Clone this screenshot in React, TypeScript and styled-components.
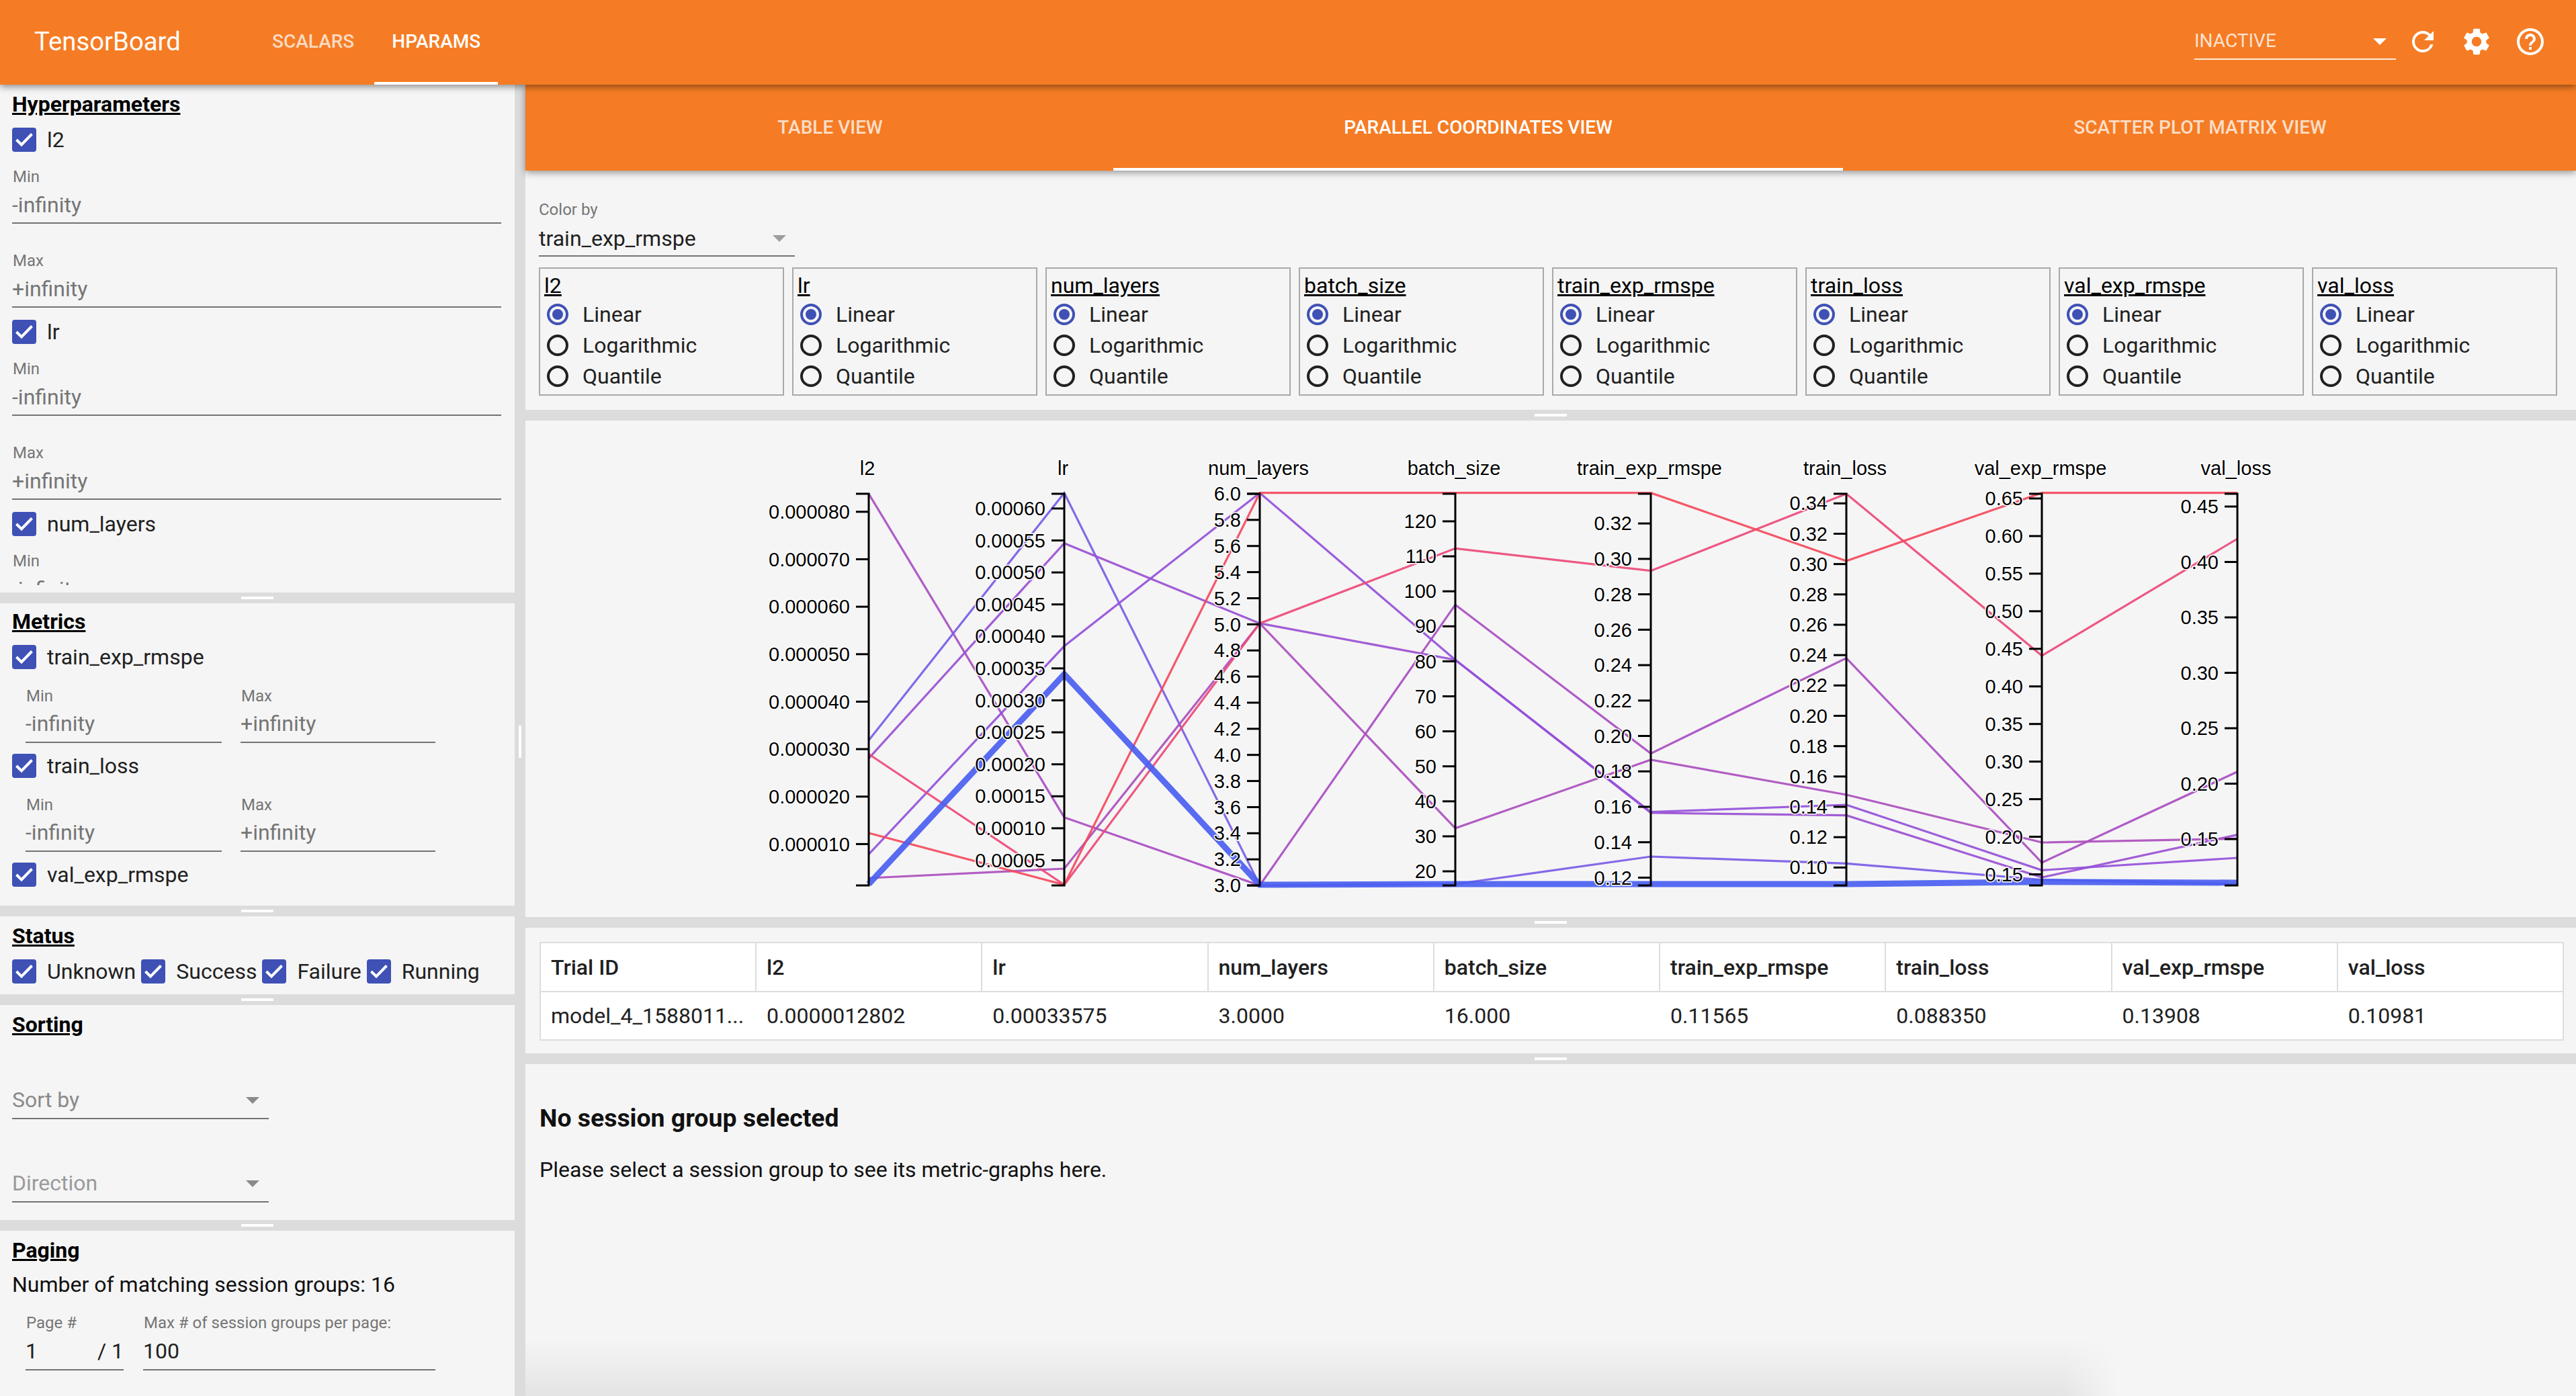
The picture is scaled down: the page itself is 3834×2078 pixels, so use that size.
import React from 'react'
import styled, { createGlobalStyle } from 'styled-components'
import { MdRefresh, MdSettings, MdHelpOutline } from 'react-icons/md'

const GlobalStyle = createGlobalStyle`
  html, body {
    margin: 0;
    padding: 0;
    background: #f5f5f5;
    overflow: hidden;
  }
  body {
    font-family: Roboto, "Liberation Sans", sans-serif;
    font-size: 32px;
    line-height: 40px;
    color: #212121;
  }
`

const Page = styled.div`
  width: 3834px;
  height: 2078px;
  display: flex;
  flex-direction: column;
  overflow: hidden;
`

const Toolbar = styled.header`
  position: relative;
  z-index: 3;
  flex: none;
  height: 126px;
  display: flex;
  align-items: center;
  padding-left: 51px;
  background: #f57c24;
  color: #fff;
  box-shadow: 0 3px 10px rgba(0, 0, 0, 0.45);
`

const Logo = styled.div`
  width: 217px;
  font-size: 38.3px;
  line-height: 48px;
  white-space: nowrap;
  margin-right: 111px;
  margin-bottom: 2px;
`

const NavTab = styled.div<{ $active?: boolean }>`
  align-self: stretch;
  display: flex;
  align-items: center;
  box-sizing: border-box;
  padding: 2px 26px 0;
  margin-right: 4px;
  font-size: 28px;
  font-weight: 500;
  color: ${(p) => (p.$active ? '#fff' : 'rgba(255,255,255,0.72)')};
  border-bottom: 4px solid ${(p) => (p.$active ? '#fff' : 'transparent')};
`

const ToolRight = styled.div`
  margin-left: auto;
  display: flex;
  align-items: center;
  padding-right: 44px;
`

const ReloadSelect = styled.div`
  position: relative;
  box-sizing: border-box;
  width: 300px;
  margin-top: 6px;
  margin-right: 16px;
  padding-bottom: 8px;
  border-bottom: 2px solid rgba(255, 255, 255, 0.85);
  font-size: 28px;
  line-height: 36px;
  color: rgba(255, 255, 255, 0.8);
`

const Caret = styled.span<{ $color: string; $right: number; $top: number }>`
  position: absolute;
  right: ${(p) => p.$right}px;
  top: ${(p) => p.$top}px;
  width: 0;
  height: 0;
  border-left: 10px solid transparent;
  border-right: 10px solid transparent;
  border-top: 10px solid ${(p) => p.$color};
`

const IconBtn = styled.div`
  width: 48px;
  height: 48px;
  margin-bottom: 2px;
  font-size: 48px;
  display: flex;
  & + & {
    margin-left: 32px;
  }
`

const Body = styled.div`
  flex: 1;
  min-height: 0;
  display: flex;
`

const Sidebar = styled.aside`
  flex: none;
  width: 766px;
  display: flex;
  flex-direction: column;
  background: #f5f5f5;
`

const Section = styled.section<{ $h?: number; $top?: number }>`
  flex: ${(p) => (p.$h ? 'none' : '1')};
  height: ${(p) => (p.$h ? `${p.$h}px` : 'auto')};
  box-sizing: border-box;
  padding: ${(p) => p.$top ?? 9}px 20px 0 18px;
  overflow: hidden;
`

const Clip = styled.div<{ $h: number }>`
  height: ${(p) => p.$h}px;
  overflow: hidden;
`

const Title = styled.h4`
  margin: 0 0 15px;
  font-size: 32px;
  line-height: 40px;
  font-weight: 700;
  color: #000;
  text-decoration: underline;
`

const HGutter = styled.div`
  flex: none;
  height: 16px;
  background: #dcdcdc;
  display: flex;
  align-items: center;
  justify-content: center;
`

const Pill = styled.span`
  width: 48px;
  height: 4px;
  background: #fff;
`

const VGutter = styled.div`
  flex: none;
  width: 16px;
  padding-top: 4px;
  box-sizing: border-box;
  background: #dcdcdc;
  display: flex;
  align-items: center;
  justify-content: center;
`

const VPill = styled.span`
  width: 4px;
  height: 48px;
  background: #fff;
`

const CheckRow = styled.div<{ $gap?: number }>`
  height: 36px;
  display: flex;
  align-items: center;
  margin-top: ${(p) => p.$gap ?? 0}px;
`

const CheckBox = styled.span`
  flex: none;
  width: 36px;
  height: 36px;
  border-radius: 4px;
  background: #3f51b5;
  margin-right: 16px;
  display: flex;
`

const StatusRow = styled.div`
  display: flex;
`

const StatusItem = styled.div`
  display: flex;
  align-items: center;
  height: 36px;
  margin-right: 8px;
`

const Field = styled.div<{ $top: number }>`
  margin-top: ${(p) => p.$top}px;
`

const FieldLabel = styled.div`
  font-size: 24px;
  line-height: 30px;
  color: #757575;
  padding-left: 1px;
`

const FieldValue = styled.div<{ $gap: number; $pad: number; $dark?: boolean }>`
  margin-top: ${(p) => p.$gap}px;
  padding-bottom: ${(p) => p.$pad}px;
  line-height: 40px;
  color: ${(p) => (p.$dark ? '#212121' : '#757575')};
  border-bottom: 2px solid #737373;
  display: flex;
  justify-content: space-between;
`

const FieldPair = styled.div<{ $cols: string; $gap: number; $top: number }>`
  display: grid;
  grid-template-columns: ${(p) => p.$cols};
  column-gap: ${(p) => p.$gap}px;
  margin-top: ${(p) => p.$top}px;
  padding-left: 20px;
`

const SelectBox = styled.div<{ $top: number; $w: number; $color: string; $pad: number }>`
  position: relative;
  width: ${(p) => p.$w}px;
  margin-top: ${(p) => p.$top}px;
  padding-bottom: ${(p) => p.$pad}px;
  line-height: 40px;
  color: ${(p) => p.$color};
  border-bottom: 2px solid #737373;
`

const PlainLine = styled.div`
  margin-top: -4px;
  color: #111;
`

const Main = styled.main`
  flex: 1;
  min-width: 0;
  display: flex;
  flex-direction: column;
  background: #f5f5f5;
`

const TabBar = styled.nav`
  position: relative;
  z-index: 2;
  flex: none;
  height: 128px;
  display: flex;
  background: #f57c24;
  box-shadow: 0 3px 10px rgba(0, 0, 0, 0.4);
`

const ViewTab = styled.div<{ $w: number; $active?: boolean; $shift?: number }>`
  flex: none;
  width: ${(p) => p.$w}px;
  box-sizing: border-box;
  display: flex;
  align-items: center;
  justify-content: center;
  padding-top: 4px;
  padding-left: ${(p) => Math.max(p.$shift ?? 0, 0)}px;
  padding-right: ${(p) => Math.max(-(p.$shift ?? 0), 0)}px;
  font-size: 28px;
  font-weight: 500;
  color: ${(p) => (p.$active ? '#fff' : 'rgba(255,255,255,0.75)')};
  border-bottom: 4px solid ${(p) => (p.$active ? '#fff' : 'transparent')};
`

const ControlsPanel = styled.div`
  flex: none;
  height: 356px;
  box-sizing: border-box;
  padding: 43px 20px 0;
`

const ColorLabel = styled.div`
  font-size: 24px;
  line-height: 30px;
  color: #757575;
`

const ScaleRow = styled.div`
  display: flex;
  gap: 12px;
  margin-top: 16px;
`

const ScaleBox = styled.div`
  flex: none;
  width: 365px;
  height: 191px;
  box-sizing: border-box;
  padding: 5px 6px 0;
  border: 2px solid #a9a9a9;
`

const ScaleName = styled.div`
  color: #000;
  text-decoration: underline;
`

const RadioRow = styled.div`
  height: 46px;
  display: flex;
  align-items: center;
  padding-left: 4px;
`

const Radio = styled.span<{ $on?: boolean }>`
  flex: none;
  box-sizing: border-box;
  width: 32px;
  height: 32px;
  margin-right: 21px;
  border-radius: 50%;
  border: 4px solid ${(p) => (p.$on ? '#3f51b5' : '#212121')};
  display: flex;
  align-items: center;
  justify-content: center;
  &::after {
    content: '';
    width: 16px;
    height: 16px;
    border-radius: 50%;
    background: ${(p) => (p.$on ? '#3f51b5' : 'transparent')};
  }
`

const ChartPanel = styled.div`
  flex: none;
  height: 739px;
`

const ChartSvg = styled.svg`
  display: block;
  text {
    font-family: "Liberation Sans", Arial, sans-serif;
    font-size: 29px;
    fill: #000;
    paint-order: stroke;
    stroke: #fff;
    stroke-width: 3px;
    stroke-linejoin: round;
  }
`

const TablePanel = styled.div`
  flex: none;
  height: 187px;
  box-sizing: border-box;
  padding: 21px 18px 0 21px;
`

const Table = styled.div`
  background: #fff;
  border: 2px solid #ddd;
`

const TableRow = styled.div<{ $head?: boolean }>`
  display: grid;
  grid-template-columns: 319px repeat(8, 1fr);
  height: ${(p) => (p.$head ? 71 : 70)}px;
  border-bottom: ${(p) => (p.$head ? '2px solid #ddd' : 'none')};
`

const Cell = styled.div<{ $head?: boolean }>`
  display: flex;
  align-items: center;
  padding-left: 15px;
  white-space: nowrap;
  overflow: hidden;
  color: #212121;
  font-weight: ${(p) => (p.$head ? 500 : 400)};
  border-left: ${(p) => (p.$head ? '2px solid #ddd' : '2px solid transparent')};
  &:first-child {
    border-left: none;
  }
`

const Details = styled.div`
  position: relative;
  flex: 1;
  box-sizing: border-box;
  padding: 58px 21px 0;
  &::after {
    content: '';
    position: absolute;
    left: 0;
    bottom: 0;
    width: 2370px;
    height: 85px;
    background: linear-gradient(rgba(0, 0, 0, 0), rgba(0, 0, 0, 0.065));
    mask-image: linear-gradient(to right, #000 96.5%, transparent);
  }
`

const DetailsTitle = styled.h3`
  margin: 0;
  font-size: 37.4px;
  line-height: 44px;
  font-weight: 700;
  color: #111;
`

const DetailsText = styled.p`
  margin: 35px 0 0;
  color: #111;
`

const Check = () => (
  <svg width="36" height="36" viewBox="0 0 36 36">
    <path d="M6.5 18 L14 25.5 L29.5 9.5" fill="none" stroke="#fff" strokeWidth="4" />
  </svg>
)

const CheckItem = ({ label, gap }: { label: string; gap?: number }) => (
  <CheckRow $gap={gap}>
    <CheckBox><Check /></CheckBox>
    {label}
  </CheckRow>
)

const HparamFields = () => (
  <>
    <Field $top={22}>
      <FieldLabel>Min</FieldLabel>
      <FieldValue $gap={7} $pad={6}>-infinity</FieldValue>
    </Field>
    <Field $top={40}>
      <FieldLabel>Max</FieldLabel>
      <FieldValue $gap={7} $pad={6}>+infinity</FieldValue>
    </Field>
  </>
)

const MetricFields = () => (
  <FieldPair $cols="292px 290px" $gap={28} $top={25}>
    <div>
      <FieldLabel>Min</FieldLabel>
      <FieldValue $gap={6} $pad={7}>-infinity</FieldValue>
    </div>
    <div>
      <FieldLabel>Max</FieldLabel>
      <FieldValue $gap={6} $pad={7}>+infinity</FieldValue>
    </div>
  </FieldPair>
)

const columns = ['l2', 'lr', 'num_layers', 'batch_size', 'train_exp_rmspe', 'train_loss', 'val_exp_rmspe', 'val_loss']
const rowValues = ['0.0000012802', '0.00033575', '3.0000', '16.000', '0.11565', '0.088350', '0.13908', '0.10981']

// axis x position, tick labels with the y of the first one and the step
type Axis = { name: string; x: number; start: number; step: number; ticks: string[] }

const seq = (from: number, to: number, by: number, digits: number) => {
  const out: string[] = []
  const n = Math.round((from - to) / by)
  for (let i = 0; i <= n; i++) out.push((from - i * by).toFixed(digits))
  return out
}

const axes: Axis[] = [
  { name: 'l2', x: 1293, start: 761.8, step: 70.66, ticks: seq(0.00008, 0.00001, 0.00001, 6) },
  { name: 'lr', x: 1584, start: 756.9, step: 47.6, ticks: seq(0.0006, 0.00005, 0.00005, 5) },
  { name: 'num_layers', x: 1875, start: 735, step: 38.87, ticks: seq(6, 3, 0.2, 1) },
  { name: 'batch_size', x: 2166, start: 776, step: 52.1, ticks: seq(120, 20, 10, 0) },
  { name: 'train_exp_rmspe', x: 2457, start: 779.2, step: 52.72, ticks: seq(0.32, 0.12, 0.02, 2) },
  { name: 'train_loss', x: 2748, start: 749.3, step: 45.17, ticks: seq(0.34, 0.1, 0.02, 2) },
  { name: 'val_exp_rmspe', x: 3039, start: 742, step: 55.95, ticks: seq(0.65, 0.15, 0.05, 2) },
  { name: 'val_loss', x: 3330, start: 754, step: 82.5, ticks: seq(0.45, 0.15, 0.05, 2) },
]

const AXIS_TOP = 735
const AXIS_BOTTOM = 1318

const trials: { color: string; width?: number; ys: number[] }[] = [
  { color: '#a94dc2', ys: [735, 1216.7, 1318, 900.2, 1121.6, 979.6, 1284, 1148.8] },
  { color: '#7a5ce6', ys: [1102, 733.7, 1318, 1316, 1275, 1285.4, 1309.5, 1316] },
  { color: '#9a50d2', ys: [1128.8, 808.7, 927.9, 982.3, 1210, 1213.6, 1306, 1242.6] },
  { color: '#9450da', ys: [1271.6, 961.8, 733.7, 982.3, 1208.7, 1198, 1295.3, 1277] },
  { color: '#ab4fbe', ys: [1307, 1293, 927.9, 1232.8, 1131, 1183, 1254, 1248.4] },
  { color: '#ec4a78', ys: [1122.5, 1317, 927.9, 816.3, 849.7, 735, 976, 802] },
  { color: '#f44a5c', ys: [1240, 1317, 733.7, 733.7, 733.7, 835, 733.7, 733.7] },
  { color: '#4a5ef0', width: 9, ys: [1316, 1003.7, 1317, 1316, 1316, 1316, 1312.7, 1314] },
]

const ParallelChart = () => (
  <ChartSvg width="3052" height="739" viewBox="782 626 3052 739">
    {trials.map((t, i) => (
      <polyline
        key={i}
        points={t.ys.map((y, j) => `${axes[j].x},${y}`).join(' ')}
        fill="none"
        stroke={t.color}
        strokeWidth={t.width ?? 3.2}
        strokeOpacity={0.92}
      />
    ))}
    {axes.map((a) => (
      <g key={a.name}>
        <text x={a.x - 2} y={697} dy="0.35em" textAnchor="middle">{a.name}</text>
        <path
          d={`M${a.x - 19} ${AXIS_TOP}H${a.x}V${AXIS_BOTTOM}H${a.x - 19}`}
          fill="none"
          stroke="#000"
          strokeWidth="3"
        />
        {a.ticks.map((t, i) => {
          const y = a.start + i * a.step
          return (
            <g key={t}>
              <path d={`M${a.x - 19} ${y}H${a.x}`} stroke="#000" strokeWidth="3" />
              <text x={a.x - 28} y={y} dy="0.35em" textAnchor="end">{t}</text>
            </g>
          )
        })}
      </g>
    ))}
  </ChartSvg>
)

const App = () => (
  <Page>
    <GlobalStyle />
    <Toolbar>
      <Logo>TensorBoard</Logo>
      <NavTab>SCALARS</NavTab>
      <NavTab $active>HPARAMS</NavTab>
      <ToolRight>
        <ReloadSelect>
          INACTIVE
          <Caret $color="#fff" $right={14} $top={14} />
        </ReloadSelect>
        <IconBtn><MdRefresh /></IconBtn>
        <IconBtn><MdSettings /></IconBtn>
        <IconBtn><MdHelpOutline /></IconBtn>
      </ToolRight>
    </Toolbar>
    <Body>
      <Sidebar>
        <Section $h={756}>
          <Clip $h={736}>
            <Title>Hyperparameters</Title>
            <CheckItem label="l2" />
            <HparamFields />
            <CheckItem label="lr" gap={18} />
            <HparamFields />
            <CheckItem label="num_layers" gap={18} />
            <HparamFields />
          </Clip>
        </Section>
        <HGutter><Pill /></HGutter>
        <Section $h={450} $top={7}>
          <Title>Metrics</Title>
          <CheckItem label="train_exp_rmspe" />
          <MetricFields />
          <CheckItem label="train_loss" gap={16} />
          <MetricFields />
          <CheckItem label="val_exp_rmspe" gap={16} />
        </Section>
        <HGutter><Pill /></HGutter>
        <Section $h={116}>
          <Title>Status</Title>
          <StatusRow>
            {['Unknown', 'Success', 'Failure', 'Running'].map((s) => (
              <StatusItem key={s}>
                <CheckBox><Check /></CheckBox>
                {s}
              </StatusItem>
            ))}
          </StatusRow>
        </Section>
        <HGutter><Pill /></HGutter>
        <Section $h={320}>
          <Title>Sorting</Title>
          <SelectBox $top={72} $w={382} $pad={7} $color="#8a8a8a">
            Sort by
            <Caret $color="#8a8a8a" $right={14} $top={16} />
          </SelectBox>
          <SelectBox $top={75} $w={382} $pad={7} $color="#9a9a9a">
            Direction
            <Caret $color="#8a8a8a" $right={14} $top={16} />
          </SelectBox>
        </Section>
        <HGutter><Pill /></HGutter>
        <Section>
          <Title>Paging</Title>
          <PlainLine>Number of matching session groups: 16</PlainLine>
          <FieldPair $cols="146px 435px" $gap={29} $top={22}>
            <div>
              <FieldLabel>Page #</FieldLabel>
              <FieldValue $gap={7} $pad={7} $dark>
                <span>1</span>
                <span>/ 1</span>
              </FieldValue>
            </div>
            <div>
              <FieldLabel>Max # of session groups per page:</FieldLabel>
              <FieldValue $gap={7} $pad={7} $dark>100</FieldValue>
            </div>
          </FieldPair>
        </Section>
      </Sidebar>
      <VGutter><VPill /></VGutter>
      <Main>
        <TabBar>
          <ViewTab $w={875} $shift={32}>TABLE VIEW</ViewTab>
          <ViewTab $w={1086} $active>PARALLEL COORDINATES VIEW</ViewTab>
          <ViewTab $w={1091} $shift={-28}>SCATTER PLOT MATRIX VIEW</ViewTab>
        </TabBar>
        <ControlsPanel>
          <ColorLabel>Color by</ColorLabel>
          <SelectBox $top={8} $w={381} $pad={5} $color="#212121">
            train_exp_rmspe
            <Caret $color="#9e9e9e" $right={13} $top={15} />
          </SelectBox>
          <ScaleRow>
            {columns.map((c) => (
              <ScaleBox key={c}>
                <ScaleName>{c}</ScaleName>
                <RadioRow><Radio $on />Linear</RadioRow>
                <RadioRow><Radio />Logarithmic</RadioRow>
                <RadioRow><Radio />Quantile</RadioRow>
              </ScaleBox>
            ))}
          </ScaleRow>
        </ControlsPanel>
        <HGutter><Pill /></HGutter>
        <ChartPanel><ParallelChart /></ChartPanel>
        <HGutter><Pill /></HGutter>
        <TablePanel>
          <Table>
            <TableRow $head>
              <Cell $head>Trial ID</Cell>
              {columns.map((c) => <Cell $head key={c}>{c}</Cell>)}
            </TableRow>
            <TableRow>
              <Cell>model_4_1588011...</Cell>
              {rowValues.map((v) => <Cell key={v}>{v}</Cell>)}
            </TableRow>
          </Table>
        </TablePanel>
        <HGutter><Pill /></HGutter>
        <Details>
          <DetailsTitle>No session group selected</DetailsTitle>
          <DetailsText>Please select a session group to see its metric-graphs here.</DetailsText>
        </Details>
      </Main>
    </Body>
  </Page>
)

export default App
